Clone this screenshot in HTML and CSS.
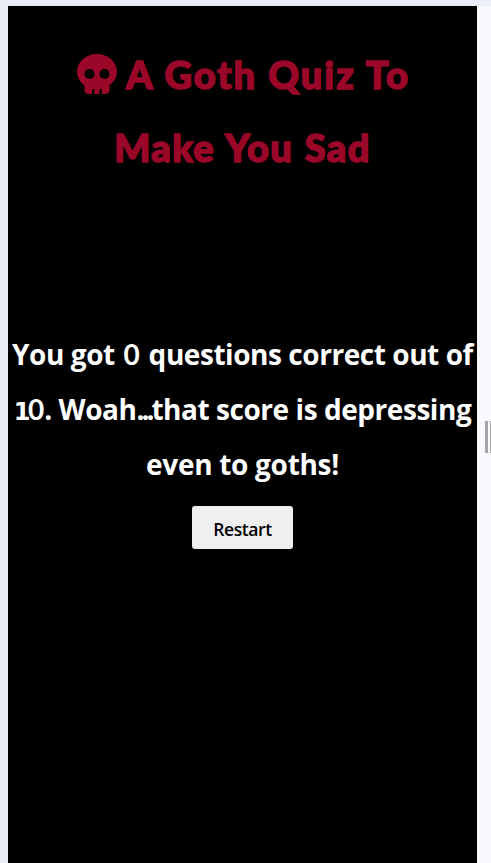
FILE: index.html
```html
<!DOCTYPE html>
<html lang="en">
<head>
<meta charset="utf-8">
<title>A Goth Quiz To Make You Sad</title>
<link rel="stylesheet" href="styles.css">
</head>
<body>
<main class="device">
  <h1 class="title">
    <span class="line"><svg class="skull" viewBox="0 0 512 512" aria-hidden="true"><path d="M416 398.900C474.500 357.800 512 294.500 512 224C512 100.300 397.400 0 256 0S0 100.300 0 224C0 294.500 37.500 357.800 96 398.900V464C96 490.500 117.500 512 144 512H192V464C192 455.200 199.200 448 208 448S224 455.200 224 464V512H288V464C288 455.200 295.200 448 304 448S320 455.200 320 464V512H368C394.500 512 416 490.500 416 464ZM160 320A64 64 0 1 1 160 192A64 64 0 1 1 160 320ZM352 320A64 64 0 1 1 352 192A64 64 0 1 1 352 320Z"/></svg><span class="title-a">A Goth Quiz To</span></span>
    <span class="line"><span class="title-b">Make You Sad</span></span>
  </h1>
  <section class="result">
    <h2 class="score">
      <span class="line"><span class="score-a">You got <span class="zero">0</span> questions correct out of</span></span>
      <span class="line"><span class="score-b"><span class="one">1</span><span class="zero">0</span>. Woah<span class="dots">...</span>that score is depressing</span></span>
      <span class="line"><span class="score-c">even to goths!</span></span>
    </h2>
    <button class="restart" type="button">Restart</button>
  </section>
</main>
<aside class="handle"><span class="grip"></span><span class="grip"></span></aside>
</body>
</html>
```
FILE: styles.css
```css
* { box-sizing: border-box; }
body {
  margin: 0;
  height: 863px;
  padding: 6px 0 0 8px;
  display: flex;
  overflow: hidden;
  background: #e9eef7;
  font-family: "Open Sans", sans-serif;
}
.device { flex: none; width: 469px; background: #000; text-align: center; }
.line { display: flex; justify-content: center; align-items: center; white-space: nowrap; }
.title { margin: 31px 0 0; color: #9b0729; font: 900 38px Lato, sans-serif; -webkit-text-stroke: 1.5px #9b0729; }
.title .line { height: 73px; }
.title-a { letter-spacing: 2px; margin-right: -2px; }
.title-b { letter-spacing: 1.4px; word-spacing: 1px; }
.skull { width: 40px; height: 40px; margin-right: 9px; fill: currentColor; }
.result { margin-top: 143px; }
.score { margin: 0; color: #fff; font-size: 28px; font-weight: 700; }
.score .line { height: 55px; }
.score-a { letter-spacing: -0.45px; }
.score-b { letter-spacing: -0.45px; }
.score-c { letter-spacing: -0.3px; }
.zero { font-family: Lato, sans-serif; font-size: 28px; letter-spacing: 0; }
.score-a .zero { padding: 0 2px; }
.one { font-family: "DejaVu Sans", sans-serif; font-size: 24px; letter-spacing: -2.5px; }
.dots { letter-spacing: -3px; }
.restart {
  width: 101px;
  height: 43px;
  margin: 15px 0 0;
  padding: 2px 0 0;
  border: 0;
  border-radius: 3px;
  background: #efefef;
  color: #000;
  font: 600 17.500px "Open Sans", sans-serif;
  letter-spacing: -0.4px;
}
.handle { flex: 1; min-width: 0; display: flex; align-items: center; gap: 2px; padding: 4px 0 0 8px; background: #f9fafe; }
.grip { flex: none; width: 3px; height: 32px; background: #a6a6a6; }
```
